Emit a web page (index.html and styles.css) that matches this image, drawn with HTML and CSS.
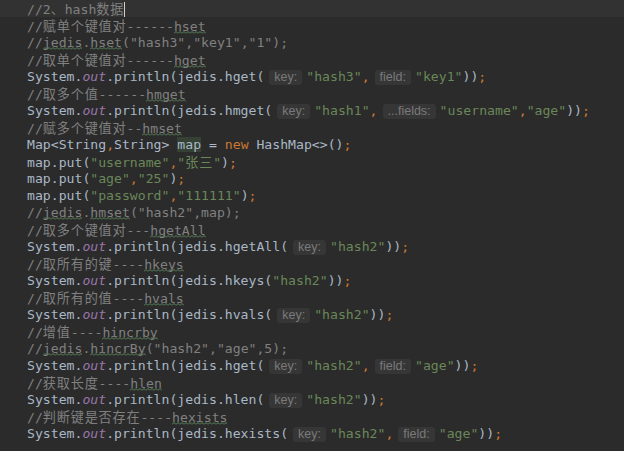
FILE: index.html
```html
<!DOCTYPE html>
<html lang="zh">
<head>
    <meta charset="UTF-8">
    <title>hash数据</title>
    <link rel="stylesheet" href="styles.css">
</head>
<body>
    <div class="editor">
        <div class="line current"><span class="cm">//2<span class="zh">、</span>hash<span class="zh">数据</span></span><span class="caret"></span></div>
        <div class="line"><span class="cm">//<span class="zh">赋单个键值对</span>------<span class="typo">hset</span></span></div>
        <div class="line"><span class="cm">//<span class="typo">jedis</span>.<span class="typo">hset</span>("hash3","key1","1");</span></div>
        <div class="line"><span class="cm">//<span class="zh">取单个键值对</span>------<span class="typo">hget</span></span></div>
        <div class="line">System.<span class="fld">out</span>.println(jedis.hget(<span class="hint">key:</span><span class="str">"hash3"</span><span class="kw">,</span><span class="hint">field:</span><span class="str">"key1"</span>))<span class="kw">;</span></div>
        <div class="line"><span class="cm">//<span class="zh">取多个值</span>------<span class="typo">hmget</span></span></div>
        <div class="line">System.<span class="fld">out</span>.println(jedis.hmget(<span class="hint">key:</span><span class="str">"hash1"</span><span class="kw">,</span><span class="hint">...fields:</span><span class="str">"username"</span><span class="kw">,</span><span class="str">"age"</span>))<span class="kw">;</span></div>
        <div class="line"><span class="cm">//<span class="zh">赋多个键值对</span>--<span class="typo">hmset</span></span></div>
        <div class="line">Map&lt;String<span class="kw">,</span>String&gt; <span class="usage">map</span> = <span class="kw">new</span> HashMap&lt;&gt;()<span class="kw">;</span></div>
        <div class="line">map.put(<span class="str">"username"</span><span class="kw">,</span><span class="str">"<span class="zh">张三</span>"</span>)<span class="kw">;</span></div>
        <div class="line">map.put(<span class="str">"age"</span><span class="kw">,</span><span class="str">"25"</span>)<span class="kw">;</span></div>
        <div class="line">map.put(<span class="str">"password"</span><span class="kw">,</span><span class="str">"111111"</span>)<span class="kw">;</span></div>
        <div class="line"><span class="cm">//<span class="typo">jedis</span>.<span class="typo">hmset</span>("hash2",map);</span></div>
        <div class="line"><span class="cm">//<span class="zh">取多个键值对</span>---<span class="typo">hgetAll</span></span></div>
        <div class="line">System.<span class="fld">out</span>.println(jedis.hgetAll(<span class="hint">key:</span><span class="str">"hash2"</span>))<span class="kw">;</span></div>
        <div class="line"><span class="cm">//<span class="zh">取所有的键</span>----<span class="typo">hkeys</span></span></div>
        <div class="line">System.<span class="fld">out</span>.println(jedis.hkeys(<span class="str">"hash2"</span>))<span class="kw">;</span></div>
        <div class="line"><span class="cm">//<span class="zh">取所有的值</span>----<span class="typo">hvals</span></span></div>
        <div class="line">System.<span class="fld">out</span>.println(jedis.hvals(<span class="hint">key:</span><span class="str">"hash2"</span>))<span class="kw">;</span></div>
        <div class="line"><span class="cm">//<span class="zh">增值</span>----<span class="typo">hincrby</span></span></div>
        <div class="line"><span class="cm">//<span class="typo">jedis</span>.<span class="typo">hincrBy</span>("hash2","age",5);</span></div>
        <div class="line">System.<span class="fld">out</span>.println(jedis.hget(<span class="hint">key:</span><span class="str">"hash2"</span><span class="kw">,</span><span class="hint">field:</span><span class="str">"age"</span>))<span class="kw">;</span></div>
        <div class="line"><span class="cm">//<span class="zh">获取长度</span>----<span class="typo">hlen</span></span></div>
        <div class="line">System.<span class="fld">out</span>.println(jedis.hlen(<span class="hint">key:</span><span class="str">"hash2"</span>))<span class="kw">;</span></div>
        <div class="line"><span class="cm">//<span class="zh">判断键是否存在</span>----<span class="typo">hexists</span></span></div>
        <div class="line">System.<span class="fld">out</span>.println(jedis.hexists(<span class="hint">key:</span><span class="str">"hash2"</span><span class="kw">,</span><span class="hint">field:</span><span class="str">"age"</span>))<span class="kw">;</span></div>
    </div>
</body>
</html>
```

FILE: styles.css
```css
html, body {
    margin: 0;
    background: #2b2b2b;
}
.editor {
    width: 624px;
    height: 451px;
    overflow: hidden;
    font-family: "DejaVu Sans Mono", "Liberation Mono", "Noto Sans CJK SC", monospace;
    font-size: 13.15px;
    color: #a9b7c6;
}
.line {
    height: 17px;
    line-height: 17px;
    padding-left: 27px;
    white-space: pre;
}
.line.current {
    background: #323232;
}
.zh {
    display: inline-block;
    height: 17px;
    line-height: 17px;
    font-family: "Noto Sans CJK SC", sans-serif;
    letter-spacing: 0.8px;
}
.cm {
    color: #808080;
}
.str {
    color: #6a8759;
}
.kw {
    color: #cc7832;
}
.fld {
    color: #9876aa;
    font-style: italic;
}
.usage {
    background: #344134;
}
/* волнистое подчёркивание опечаток */
.typo {
    background-image: url("data:image/svg+xml,%3Csvg xmlns='http://www.w3.org/2000/svg' width='4' height='3'%3E%3Cpath d='M0 2.5L2 0.5L4 2.5' fill='none' stroke='%235f8a5f' stroke-width='1'/%3E%3C/svg%3E");
    background-repeat: repeat-x;
    background-position: 0 100%;
    background-size: 4px 3px;
}
.hint {
    display: inline-block;
    margin: 0 4px 0 5px;
    padding: 0 5px;
    line-height: 15px;
    font-family: "Liberation Sans", Arial, sans-serif;
    font-size: 12.5px;
    color: #7a7a7a;
    background: #363636;
    border-radius: 3px;
}
.caret {
    display: inline-block;
    width: 1px;
    height: 15px;
    vertical-align: -3px;
    background: #d0d0d0;
}
```
